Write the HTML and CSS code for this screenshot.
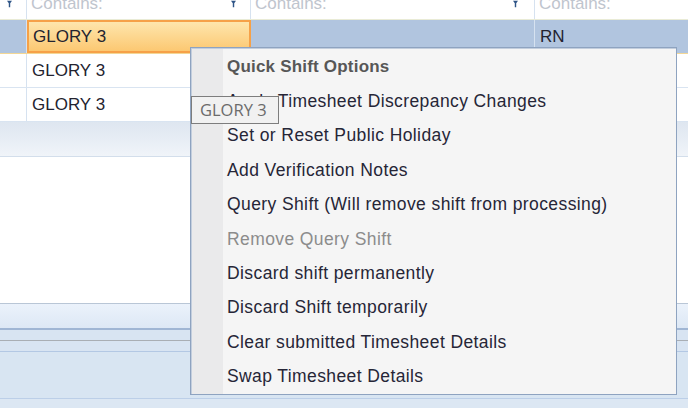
FILE: index.html
```html
<!DOCTYPE html>
<html lang="en">
<head>
  <meta charset="UTF-8" />
  <title>Timesheet shifts</title>
  <link rel="stylesheet" href="styles.css">
</head>
<body>
  <div class="screen">
    <div class="grid">
      <div class="row filter-row">
        <div class="cell first">
          <svg class="funnel" viewBox="0 0 7 9"><path d="M0 0H7L4.5 3.5V9H2.5V3.5Z" /></svg>
        </div>
        <div class="cell"><span class="hint">Contains:</span>
          <svg class="funnel" viewBox="0 0 7 9"><path d="M0 0H7L4.5 3.5V9H2.5V3.5Z" /></svg>
        </div>
        <div class="cell"><span class="hint">Contains:</span>
          <svg class="funnel" viewBox="0 0 7 9"><path d="M0 0H7L4.5 3.5V9H2.5V3.5Z" /></svg>
        </div>
        <div class="cell"><span class="hint">Contains:</span></div>
      </div>

      <div class="row data-row selected">
        <div class="cell"></div>
        <div class="cell active">GLORY 3</div>
        <div class="cell"></div>
        <div class="cell">RN</div>
      </div>
      <div class="row data-row">
        <div class="cell"></div>
        <div class="cell">GLORY 3</div>
        <div class="cell"></div>
        <div class="cell"></div>
      </div>
      <div class="row data-row">
        <div class="cell"></div>
        <div class="cell">GLORY 3</div>
        <div class="cell"></div>
        <div class="cell"></div>
      </div>
    </div>

    <div class="group-band"></div>
    <div class="empty-area"></div>

    <div class="footer">
      <div class="footer-bar"></div>
      <div class="footer-strip"></div>
      <div class="footer-strip grey"></div>
      <div class="footer-panel"></div>
      <div class="footer-status"></div>
    </div>

    <!-- context menu for the selected shift -->
    <ul class="context-menu">
      <li class="menu-title">Quick Shift Options</li>
      <li>Apply Timesheet Discrepancy Changes</li>
      <li>Set or Reset Public Holiday</li>
      <li>Add Verification Notes</li>
      <li>Query Shift (Will remove shift from processing)</li>
      <li class="disabled">Remove Query Shift</li>
      <li>Discard shift permanently</li>
      <li>Discard Shift temporarily</li>
      <li>Clear submitted Timesheet Details</li>
      <li>Swap Timesheet Details</li>
    </ul>

    <div class="tooltip">GLORY 3</div>
  </div>
</body>
</html>
```

FILE: styles.css
```css
body {
  margin: 0;
  padding: 0;
  background: #fff;
  font-family: 'Liberation Sans', Arial, sans-serif;
  overflow: hidden;
}

.screen {
  position: relative;
  width: 688px;
  height: 408px;
  overflow: hidden;
  display: flex;
  flex-direction: column;
}

/* grid */

.grid {
  margin-top: -8px;
}

.row {
  display: grid;
  grid-template-columns: 27px 224px 284px 1fr;
  box-sizing: border-box;
}

.cell {
  box-sizing: border-box;
  border-right: 1px solid #d6e2f0;
  display: flex;
  align-items: center;
  padding-left: 5px;
  font-size: 17px;
  color: #23232f;
  white-space: nowrap;
  overflow: hidden;
}

.cell:last-child {
  border-right: none;
}

.filter-row {
  height: 28px;
  border-bottom: 1px solid #e9ebd6;
}

.filter-row .cell {
  align-items: flex-end;
  justify-content: space-between;
  padding-left: 4px;
  padding-bottom: 7px;
}

.filter-row .cell.first {
  justify-content: flex-start;
  padding-left: 7px;
}

.hint {
  color: #bfc5ce;
  line-height: 1;
}

.funnel {
  width: 5px;
  height: 8px;
  align-self: flex-start;
  margin-top: 8px;
  margin-right: 14px;
  fill: #2f5587;
}

.filter-row .cell:nth-child(3) .funnel {
  margin-right: 16px;
}

.data-row {
  height: 34px;
  border-bottom: 1px solid #d9e4f1;
}

.data-row.selected {
  background: #b1c5df;
  border-bottom: 1px solid #f3d795;
}

.cell.active {
  border: 2px solid #f6a148;
  background: linear-gradient(#fee6ad, #fcc872);
  padding-left: 4px;
}

/* lower panels */

.group-band {
  height: 35px;
  box-sizing: border-box;
  border-bottom: 1px solid #d3deeb;
  background: linear-gradient(#dee6f0, #f0f4f9);
}

.empty-area {
  height: 146px;
  background: #fff;
}

.footer {
  flex: 1;
  display: flex;
  flex-direction: column;
  background: #dbe7f3;
}

.footer-bar {
  height: 24px;
  border-top: 1px solid #b9c6d6;
  border-bottom: 2px solid #a0b6d4;
  background: linear-gradient(#ebf2fb, #dde8f5);
}

.footer-strip {
  height: 10px;
  background: #d8e4f2;
}

.footer-strip.grey {
  border-top: 1px solid #a9aeb4;
}

.footer-panel {
  height: 46px;
  border-top: 1px solid #b3c8e4;
  border-bottom: 1px solid #bccfe8;
  background: #d8e5f2;
}

.footer-status {
  flex: 1;
  background: #dce7f3;
}

/* context menu */

.context-menu {
  position: absolute;
  left: 190px;
  top: 47px;
  width: 487px;
  margin: 0;
  padding: 2px 0 0;
  list-style: none;
  box-sizing: border-box;
  border: 1px solid #8ea3c0;
  box-shadow: inset 1px 1px 0 #c3cedd;
  background: linear-gradient(to right, #eaeaeb 32px, #f5f5f5 32px);
}

.context-menu li {
  height: 34.4px;
  display: flex;
  align-items: center;
  padding-left: 36px;
  font-size: 17.5px;
  letter-spacing: 0.4px;
  color: #262637;
  white-space: nowrap;
}

.context-menu .menu-title {
  font-weight: bold;
  font-size: 17px;
  letter-spacing: 0.2px;
  color: #575757;
}

.context-menu .disabled {
  color: #8c8c8c;
}

.tooltip {
  position: absolute;
  left: 191px;
  top: 96px;
  width: 88px;
  height: 28px;
  box-sizing: border-box;
  border: 1px solid #7d7d7d;
  background: #f1f1f1;
  padding-left: 8px;
  font-family: 'Open Sans', sans-serif;
  font-size: 16.5px;
  line-height: 26px;
  color: #6b6b6b;
}
```
